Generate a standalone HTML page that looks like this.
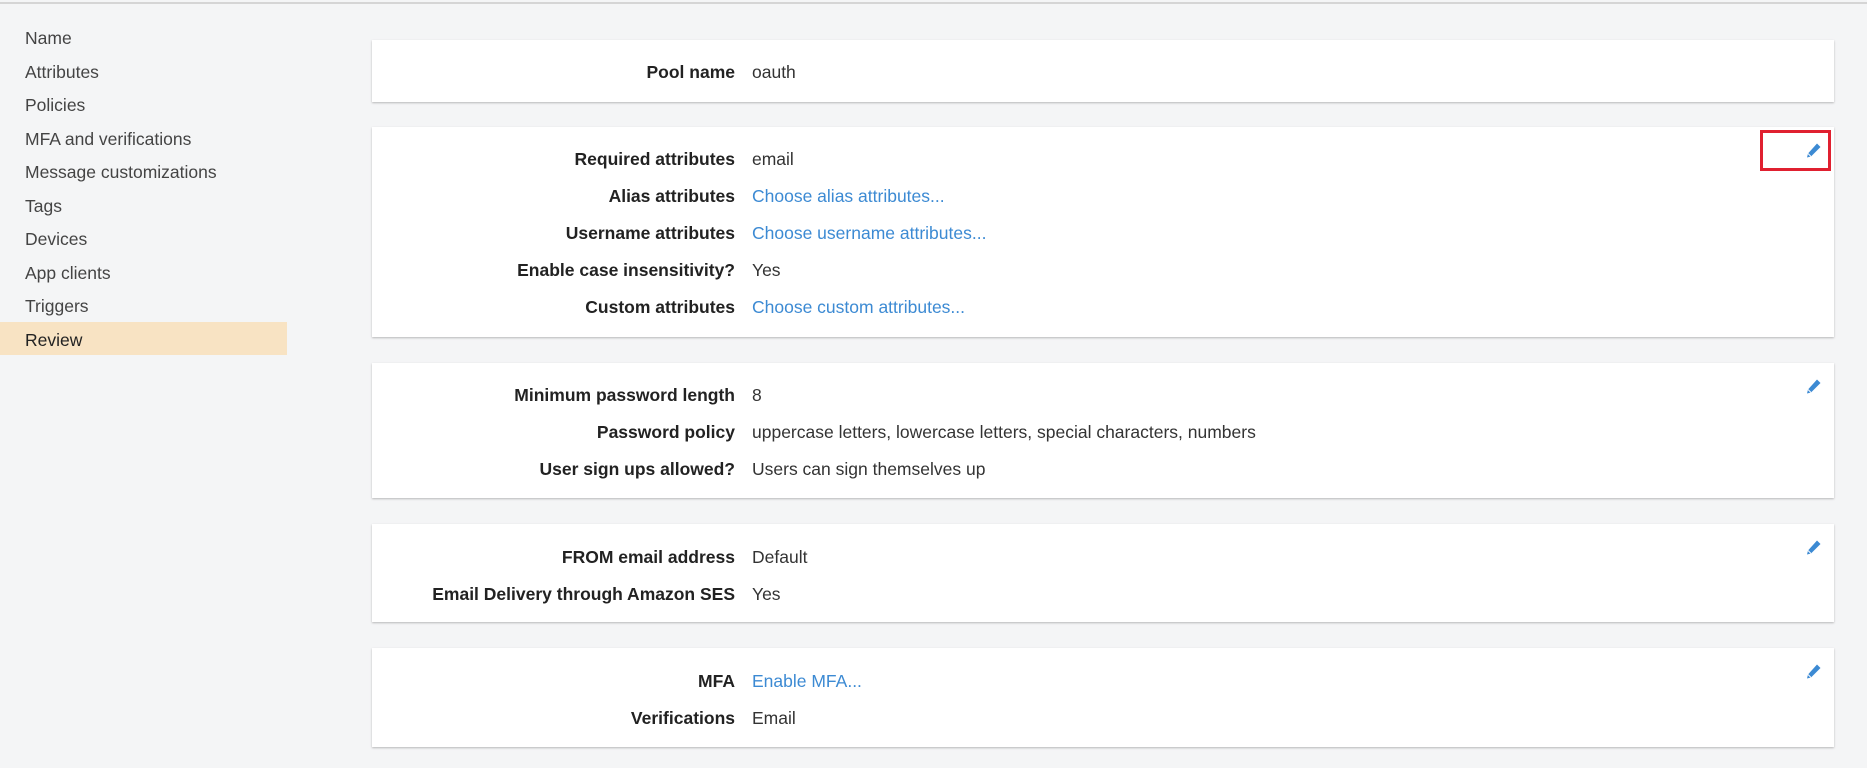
<!DOCTYPE html>
<html><head><style>
body{margin:0;width:1867px;height:768px;background:#f4f5f6;font-family:"Liberation Sans",Arial,sans-serif;font-size:17.5px;color:#333;position:relative;overflow:hidden}
.top{position:absolute;left:0;top:2px;width:1867px;height:2px;background:#d5d5d5}
.nav{position:absolute;left:25px;font-size:17.5px;color:#444}
.hl{position:absolute;left:0;top:322px;width:287px;height:33px;background:#f8e3c3}
.card{position:absolute;left:372px;width:1462px;background:#fff;box-shadow:0 1px 2px rgba(0,0,0,.25)}
.row{position:absolute;left:0;width:100%;height:20px}
.l{position:absolute;right:1099px;font-weight:bold;color:#222;white-space:nowrap}
.v{position:absolute;left:380px;white-space:nowrap;color:#333}
.a{color:#3c8ad3}
.pen{position:absolute;left:1434px;width:16px;height:16px}
</style></head><body>
<div class="top"></div>
<div class="hl"></div>
<div class="nav" style="top:28px">Name</div>
<div class="nav" style="top:62px">Attributes</div>
<div class="nav" style="top:95px">Policies</div>
<div class="nav" style="top:129px">MFA and verifications</div>
<div class="nav" style="top:162px">Message customizations</div>
<div class="nav" style="top:196px">Tags</div>
<div class="nav" style="top:229px">Devices</div>
<div class="nav" style="top:263px">App clients</div>
<div class="nav" style="top:296px">Triggers</div>
<div class="nav" style="top:330px;color:#222">Review</div>

<div class="card" style="top:40px;height:62px">
<div class="row" style="top:22px"><span class="l">Pool name</span><span class="v">oauth</span></div>
</div>

<div class="card" style="top:127px;height:210px">
<div class="row" style="top:22px"><span class="l">Required attributes</span><span class="v">email</span></div>
<div class="row" style="top:59px"><span class="l">Alias attributes</span><span class="v a">Choose alias attributes...</span></div>
<div class="row" style="top:96px"><span class="l">Username attributes</span><span class="v a">Choose username attributes...</span></div>
<div class="row" style="top:133px"><span class="l">Enable case insensitivity?</span><span class="v">Yes</span></div>
<div class="row" style="top:170px"><span class="l">Custom attributes</span><span class="v a">Choose custom attributes...</span></div>
<div style="position:absolute;left:1388px;top:3px;width:65px;height:35px;border:3px solid #e02030"></div>
<svg class="pen" style="top:15px" viewBox="0 0 16 16"><path d="M11 1.5l3.5 3.5L5 14.5 1 15.5 2 11.5z" fill="#3c8ad3"/><path d="M2 11.5l3 3" stroke="#fff" stroke-width="1"/></svg>
</div>

<div class="card" style="top:363px;height:135px">
<div class="row" style="top:22px"><span class="l">Minimum password length</span><span class="v">8</span></div>
<div class="row" style="top:59px"><span class="l">Password policy</span><span class="v">uppercase letters, lowercase letters, special characters, numbers</span></div>
<div class="row" style="top:96px"><span class="l">User sign ups allowed?</span><span class="v">Users can sign themselves up</span></div>
<svg class="pen" style="top:15px" viewBox="0 0 16 16"><path d="M11 1.5l3.5 3.5L5 14.5 1 15.5 2 11.5z" fill="#3c8ad3"/><path d="M2 11.5l3 3" stroke="#fff" stroke-width="1"/></svg>
</div>

<div class="card" style="top:524px;height:98px">
<div class="row" style="top:23px"><span class="l">FROM email address</span><span class="v">Default</span></div>
<div class="row" style="top:60px"><span class="l">Email Delivery through Amazon SES</span><span class="v">Yes</span></div>
<svg class="pen" style="top:15px" viewBox="0 0 16 16"><path d="M11 1.5l3.5 3.5L5 14.5 1 15.5 2 11.5z" fill="#3c8ad3"/><path d="M2 11.5l3 3" stroke="#fff" stroke-width="1"/></svg>
</div>

<div class="card" style="top:648px;height:99px">
<div class="row" style="top:23px"><span class="l">MFA</span><span class="v a">Enable MFA...</span></div>
<div class="row" style="top:60px"><span class="l">Verifications</span><span class="v">Email</span></div>
<svg class="pen" style="top:15px" viewBox="0 0 16 16"><path d="M11 1.5l3.5 3.5L5 14.5 1 15.5 2 11.5z" fill="#3c8ad3"/><path d="M2 11.5l3 3" stroke="#fff" stroke-width="1"/></svg>
</div>
</body></html>
